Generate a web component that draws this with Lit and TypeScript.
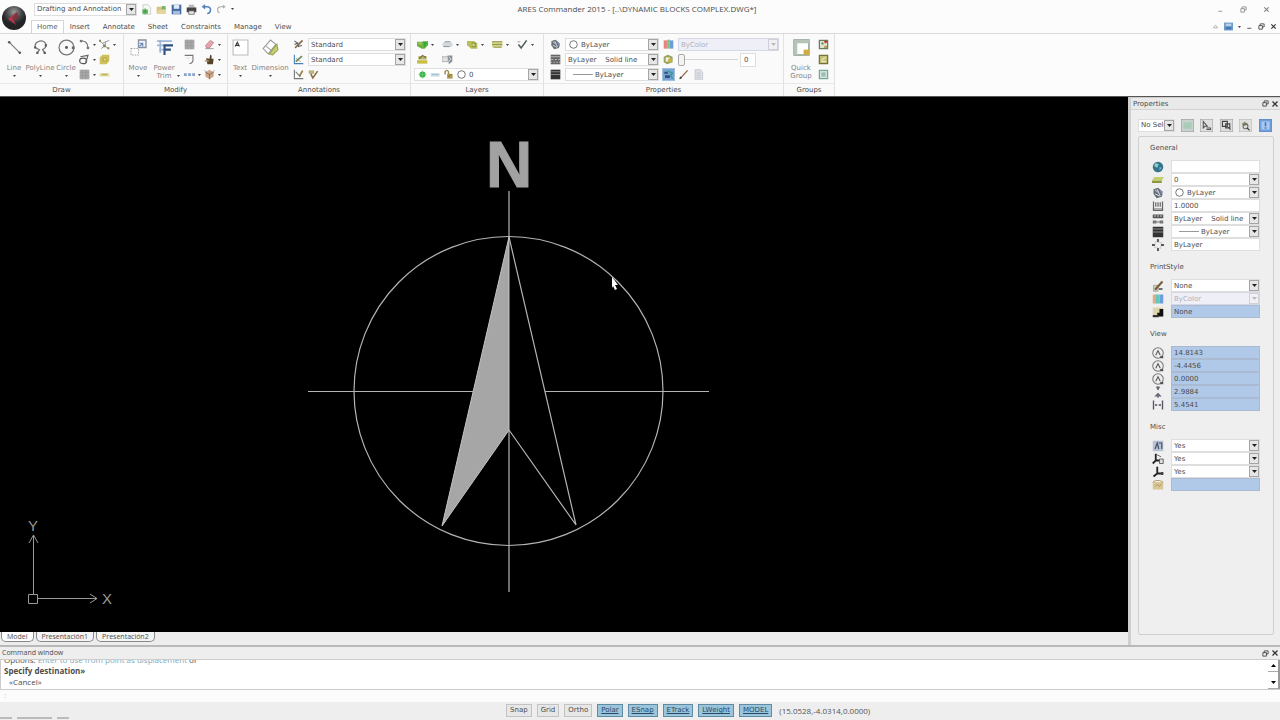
import { LitElement, html, svg, css, nothing } from "lit";
import { customElement, property } from "lit/decorators.js";
import { classMap } from "lit/directives/class-map.js";

const ICONS: Record<string, unknown> = {
  line: svg`<path d="M3 3L13 13" stroke="#777" fill="none"/><circle cx="3" cy="3" r="1.2" fill="#555"/><circle cx="13" cy="13" r="1.2" fill="#555"/>`,
  polyline: svg`<path d="M5 13L7 10L3 8C2 1 12 0 13 5C14 8 12 9 10 10L12 13" stroke="#777" stroke-width="1.2" fill="none"/><path d="M2 7h2v2H2zM4 12h2v2H4zM12 5h2v2h-2zM11 12h2v2h-2z" fill="#555"/>`,
  circle: svg`<circle cx="8" cy="8" r="7" stroke="#777" stroke-width="1.2" fill="none"/><circle cx="8" cy="8" r="1.4" fill="#555"/><path d="M13 7h2.500v2.500H13z" fill="#666"/>`,
  arc: svg`<path d="M3 3C9 2 13 6 13 13" stroke="#666" stroke-width="1.6" fill="none"/><circle cx="3" cy="3" r="2" fill="#777"/><circle cx="13" cy="13" r="2" fill="#777"/>`,
  spline: svg`<path d="M1 3L5 6L10 4L15 2M5 6L8 10L3 14M10 4L8 10L14 14" stroke="#999" stroke-width="1.4" fill="none"/><path d="M0 1h3v3H0zM6 8h4v4H6zM12 12h3v3h-3z" fill="#8a8a58"/>`,
  ellipse: svg`<ellipse cx="6" cy="10" rx="5" ry="4" stroke="#555" stroke-width="1.8" fill="none"/><path d="M2 4L13 2L10 12" stroke="#666" stroke-width="1.8" fill="none"/>`,
  region: svg`<path d="M5 1h10v9l-4 5H1V5z" fill="#cfc25e"/><path d="M5 5h7v6H5z" fill="#b8ab48"/><path d="M7 7h3v2H7z" fill="#efe9b0"/>`,
  hatch: svg`<path d="M1 1h14v14H1z" fill="#a7a7a7"/><path d="M1 5h14M1 10h14M5 1v14M10 1v14" stroke="#999"/>`,
  cloud: svg`<path d="M1 6h14v5H1z" fill="#e3dba6"/><path d="M4 8h8" stroke="#b9ac58" stroke-width="2"/>`,
  move: svg`<path d="M8 1h7v7H8z" stroke="#8590a0" stroke-width="1.3" fill="#f3f5fa"/><path d="M1 9h7v6H1z" stroke="#aaa" stroke-dasharray="1.5 1" fill="#fff"/><path d="M9 7l3-3M9 4h3v3" stroke="#6685b5" fill="none"/>`,
  trim: svg`<path d="M1 2h14M1 6h7M3 10h5M4 1v12" stroke="#9db5d6" stroke-width="1.6" fill="none"/><path d="M8 15V6h8M8 10h6" stroke="#2d5180" stroke-width="2" fill="none"/>`,
  fillet: svg`<path d="M1 2h12v7q0 4-5 5" stroke="#777" stroke-width="1.6" fill="none"/><path d="M3 6h6" stroke="#ccc"/>`,
  pattern: svg`<path d="M0 6h4v4H0zM6 6h4v4H6zM12 6h4v4h-4z" fill="#87a2c8"/>`,
  erase: svg`<path d="M2 10L9 2l5 3l-6 8H4z" fill="#e9a3ab" stroke="#a77" /><path d="M2 14h12" stroke="#777"/>`,
  hand: svg`<path d="M3 6l5 1l1-6l2 1v5h3l-1 8H5z" fill="#54432d"/><path d="M1 10h6" stroke="#b69b57" stroke-width="2"/>`,
  explode: svg`<path d="M8 1l6 4v6l-6 4l-6-4V5z" fill="#cfa68a"/><path d="M8 7v8M2 5l6 3l6-3M1 2l3 3M15 2l-3 3" stroke="#7b604d" fill="none"/>`,
  text: svg`<path d="M1 1h14v14H1z" fill="#fff" stroke="#bbb"/><path d="M3 7l2-4l2 4M4 6h2" stroke="#333" fill="none"/>`,
  dimension: svg`<path d="M1 9L8 1l5 4l-7 9z" fill="#fff" stroke="#999"/><path d="M7 14l7-9l1 5l-5 5z" fill="#c9d274" stroke="#98a250"/><path d="M4 7l5 4" stroke="#999"/>`,
  brush: svg`<path d="M3 13L14 2" stroke="#8a6d45" stroke-width="2.4"/><path d="M2 3l5 3M2 8l5-2l1 5l5-2" stroke="#666" stroke-width="1.6" fill="none"/>`,
  dimstyle: svg`<path d="M2 1v13h13" stroke="#4b82b6" stroke-width="1.6" fill="none"/><path d="M4 11L13 3" stroke="#698b47" stroke-width="2.2"/><path d="M4 6l7 5" stroke="#777"/>`,
  axes: svg`<path d="M2 1v13h13M4 4l6 7l4-9" stroke="#777" stroke-width="1.6" fill="none"/><path d="M9 10l5-7" stroke="#a88743" stroke-width="2.4"/>`,
  tag: svg`<path d="M1 2h8v5H1z" fill="#b9b27a"/><path d="M4 7l3 6l7-10" stroke="#866f46" stroke-width="2.2" fill="none"/>`,
  layergreen: svg`<path d="M0 4h8l8-1v6l-5 5H7L0 10z" fill="#6fae42"/><path d="M9 3l6 2l-4 8z" fill="#2fae34"/><path d="M2 5h5v3H2z" fill="#a8c75f"/>`,
  layergrey: svg`<path d="M3 4h10l3 4l-3 4H3L0 8z" fill="#d3d8dd"/><path d="M4 4h8M2 11h9" stroke="#92989d" stroke-width="1.6"/>`,
  layeryellow: svg`<path d="M0 3h10l5 3v8H6L0 9z" fill="#b8bf55"/><path d="M7 5h6v7H7z" fill="#959a4c"/><path d="M8 7h3v3H8z" fill="#dde295"/>`,
  layerlist: svg`<path d="M0 3h15v9H0z" fill="#d0d389"/><path d="M0 4h15M0 8h15M2 12h12" stroke="#94994e" stroke-width="1.5"/>`,
  check: svg`<path d="M2 8l4 5L14 2" stroke="#54625a" stroke-width="2.4" fill="none"/><path d="M1 3h4v2H1z" fill="#b8b8b8"/>`,
  layermanager: svg`<path d="M2 3h12v5H2z" fill="#b5b168"/><path d="M3 7l5-5l5 3" stroke="#6b6b3b" stroke-width="1.5" fill="none"/><path d="M0 9h15v5H0z" fill="#c9bd44"/>`,
  layerprev: svg`<path d="M0 4h9v7H0z" fill="#dfe3e6" stroke="#999"/><path d="M8 2h7v9l-5 4z" fill="#889199"/><path d="M10 4l3 3l-3 4" stroke="#fff" fill="none"/>`,
  dotgreen: svg`<circle cx="8" cy="8" r="4.5" fill="#35b445"/><path d="M8 2v12M2 8h12" stroke="#6fca76"/>`,
  freeze: svg`<path d="M1 6h13v5H1z" fill="#c9dde8"/><path d="M3 8h9" stroke="#8fb4c8"/>`,
  lock: svg`<path d="M3 8V4q3-4 5 0v4" fill="none" stroke="#9b8749" stroke-width="2"/><path d="M6 7h8v7H6z" fill="#ad9956"/><path d="M7 12l4-4" stroke="#665725"/>`,
  ring: svg`<circle cx="8" cy="8" r="5.5" fill="#fff" stroke="#666" stroke-width="1.3"/>`,
  palette: svg`<path d="M2 3l6-2l6 5l-1 7l-7 2l-4-6z" fill="#666e78"/><path d="M4 4l4 3M7 3l4 9M4 9l6 3" stroke="#d7dde4" stroke-width="1.3"/><path d="M10 4l4 2v6z" fill="#8d8ac0"/>`,
  linetype: svg`<path d="M1 1h14v14H1z" fill="#666"/><path d="M1 4h14M1 8h4m2 0h3m2 0h3M1 12h2m2 0h2m2 0h2m2 0h2" stroke="#ddd"/>`,
  weight: svg`<path d="M1 1h14v14H1z" fill="#333"/><path d="M1 4h14M1 8h14" stroke="#aaa"/>`,
  colors: svg`<path d="M1 2h5v12H1z" fill="#e88484"/><path d="M6 1h4v13H6z" fill="#79c982"/><path d="M10 2h5v12h-5z" fill="#6f9bdb"/>`,
  transp: svg`<path d="M1 4l6-3l7 3v8l-8 3l-5-3z" fill="#9aa45f"/><path d="M4 5h6v6H4z" fill="#f4f4e8"/><circle cx="10" cy="9" r="3" fill="#c8b348"/>`,
  painter: svg`<path d="M0 0h16v16H0z" fill="#78a2d2"/><path d="M2 4h5v3H2zM3 9h7v4H3z" fill="#324c81"/><path d="M7 3l7 3l-3 3l3 5" stroke="#379b94" stroke-width="2" fill="none"/>`,
  pencil: svg`<path d="M3 14L14 2" stroke="#8d6945" stroke-width="2"/><path d="M2 15l1-4l3 2z" fill="#333"/>`,
  page: svg`<path d="M3 1h8l3 4v10H3z" fill="#dfe1e8" stroke="#b9bcc8"/><path d="M5 6h6M5 9h6M5 12h6" stroke="#b9bcc8"/>`,
  quickgroup: svg`<path d="M1 1h14v14H1z" fill="#fff" stroke="#88a08e" stroke-width="1.4"/><path d="M1 1h14v3H1zM1 1h3v14H1z" fill="#b5c4b7"/><path d="M6 6h6v6H6z" fill="#fff"/><path d="M10 10h5v5h-5z" fill="#d3a943"/>`,
  groupedit: svg`<path d="M2 2h12v12H2z" fill="#dce4d3" stroke="#6c7f5d" stroke-width="1.8"/><path d="M5 5h3v3H5z" fill="#698c55"/><path d="M11 2v4M9 4h5" stroke="#c33" stroke-width="2"/><path d="M9 10h4v3H9z" fill="#b09b53"/>`,
  groupyellow: svg`<path d="M2 2h12v12H2z" fill="#c5c173" stroke="#75743c" stroke-width="1.8"/><path d="M5 9l6-4M5 11h6" stroke="#f3f2d3" stroke-width="1.5"/>`,
  groupteal: svg`<path d="M2 2h12v12H2z" fill="#cde2da" stroke="#7ba897" stroke-width="1.8"/><path d="M5 5h6v6H5z" fill="#9dbfb1"/>`,
  newfile: svg`<path d="M3 1h7l4 4v10H3z" fill="#f5f8f5" stroke="#b5c3b5"/><path d="M2 8h8v6H2z" fill="#58b158"/><path d="M6 6v9" stroke="#2d8c2d"/>`,
  open: svg`<path d="M1 4h6l1 2h6v8H1z" fill="#d9c27a"/><path d="M8 3h6v6H8z" fill="#7bb26d"/><path d="M1 14l3-6h11l-3 6z" fill="#e6d69d"/>`,
  save: svg`<path d="M1 1h14v14H1z" fill="#45699e"/><path d="M4 1h8v6H4z" fill="#dfe8f5"/><path d="M3 10h10v5H3z" fill="#a5bddc"/>`,
  print: svg`<path d="M4 1h8v4H4z" fill="#bbb"/><path d="M1 5h14v7H1z" fill="#444"/><path d="M4 10h8v5H4z" fill="#e8e8e8" stroke="#555"/>`,
  undo: svg`<path d="M5 4h4c7 0 6 9 0 10" stroke="#5383bd" stroke-width="2.2" fill="none"/><path d="M6 0v8L1 4z" fill="#5383bd"/>`,
  redo: svg`<path d="M11 4H7C1 4 1 11 5 13" stroke="#aaa" stroke-width="1.6" fill="none"/><path d="M10 1v6l4-3z" fill="#aaa"/>`,
  minimize: svg`<path d="M3 11h9v2H3z" fill="#444"/>`,
  restore: svg`<path d="M5 6V2h9v7h-4" stroke="#444" stroke-width="2" fill="none"/><path d="M2 6h8v8H2z" stroke="#444" stroke-width="2" fill="none"/>`,
  close: svg`<path d="M3 3l10 10M13 3L3 13" stroke="#333" stroke-width="2.6"/>`,
  up: svg`<path d="M3 11l5-6l5 6z" fill="none" stroke="#999" stroke-width="1.6"/>`,
  help: svg`<path d="M0 1h16v14H0z" fill="#6e9dcc"/><path d="M3 3h10v4H3z" fill="#b9d3ec"/><path d="M3 9h10v4H3z" fill="#4577b0"/>`,
  globe: svg`<circle cx="8" cy="8" r="7" fill="#35758b"/><path d="M4 3l5 1l-2 5l-4-2z" fill="#8fd0c6"/><path d="M10 8l3 1l-3 4z" fill="#74b0d8"/>`,
  layerprop: svg`<path d="M3 4h13l-3 5H0z" fill="#c4ce6c"/><path d="M0 9h13v3H0z" fill="#8d9740"/>`,
  scale: svg`<path d="M2 2v12h12V2M5 3v6M8 3v6M11 3v6M1 12h14" stroke="#666" stroke-width="1.6" fill="none"/>`,
  ltprop: svg`<path d="M1 2h14v5H1z" fill="#555"/><path d="M3 4h2m2 0h2m2 0h2" stroke="#eee" stroke-width="1.5"/><path d="M1 10h5v4H1zM10 10h5v4h-5z" fill="#777"/><path d="M6 12h4" stroke="#777" stroke-width="1.5"/>`,
  hyper: svg`<path d="M8 0v4M8 12v4M0 8h4M12 8h4" stroke="#555" stroke-width="2.6"/><path d="M4 4h8v8H4z" fill="none" stroke="#999" stroke-dasharray="2 2"/>`,
  printpen: svg`<path d="M2 7h6v8H2z" fill="#c9d8ba" stroke="#999"/><path d="M4 13L14 2" stroke="#7b5c38" stroke-width="2.8"/><path d="M9 12h5" stroke="#444" stroke-width="2"/>`,
  printcolors: svg`<path d="M1 2h5v12H1z" fill="#e5aa86"/><path d="M5 2h5v12H5z" fill="#62c8bb"/><path d="M10 2h5v12h-5z" fill="#6c9edc"/>`,
  printdark: svg`<path d="M1 2h14v12H1z" fill="#ded5ad"/><path d="M7 14V9h3V4h5v10z" fill="#111"/><path d="M1 12h8v3H1z" fill="#333"/>`,
  target: svg`<circle cx="8" cy="8" r="7" fill="none" stroke="#777" stroke-width="1.4"/><path d="M5 11l3-6l3 6" stroke="#555" stroke-width="1.4" fill="none"/><path d="M11 12h4v3h-4z" fill="#555"/>`,
  height: svg`<path d="M8 0v5M8 16v-5" stroke="#667" stroke-width="1.5"/><path d="M5 1h6L8 6zM3 14h10l-5-5z" fill="#667"/>`,
  width: svg`<path d="M2 2v12M14 2v12M4 8h3M9 8h3" stroke="#556" stroke-width="1.8"/>`,
  annot: svg`<path d="M1 1h14v14H1z" fill="#b8c2d4"/><path d="M4 12l3-8l2 8M9 4h4v8" stroke="#455068" stroke-width="1.6" fill="none"/>`,
  ucsper: svg`<path d="M5 1v9l-4 4M5 10h5" stroke="#222" stroke-width="2.4" fill="none"/><path d="M6 2l6 3M10 8h5v6h-5z" stroke="#444" fill="#ddd"/>`,
  ucs: svg`<path d="M7 1v9l-5 4M7 10h8" stroke="#222" stroke-width="2.4" fill="none"/><path d="M12 8h3v4h-3z" fill="#444"/>`,
  plot: svg`<path d="M1 4h14v10H1z" fill="#d9c795"/><path d="M1 4l4-2h5l5 2M4 10l3-3l3 3l3-4" stroke="#a3874a" fill="none"/>`,
  selgreen: svg`<path d="M0 0h16v16H0z" fill="#c9d3cd" stroke="#888"/><path d="M3 4h10v8H3z" fill="#a9cbb8"/>`,
  selcursor: svg`<path d="M0 0h16v16H0z" fill="#e0e0e0" stroke="#888"/><path d="M4 3v8l2-2h3zM8 11h5v2H8" stroke="#555" stroke-width="1.3" fill="none"/>`,
  selfind: svg`<path d="M0 0h16v16H0z" fill="#dcdcdc" stroke="#888"/><path d="M3 3h6v6H3zM7 6h5v5H7zM10 10l3 3" stroke="#444" stroke-width="1.4" fill="none"/>`,
  selquick: svg`<path d="M0 0h16v16H0z" fill="#dfdfdb" stroke="#aaa"/><path d="M3 6l4-3l4 3l-4 3z" fill="#9a9a78"/><circle cx="8" cy="9" r="3" fill="none" stroke="#666" stroke-width="1.3"/><path d="M10 11l3 3" stroke="#444" stroke-width="1.6"/>`,
  selhelp: svg`<path d="M0 0h16v16H0z" fill="#6f9fdb" stroke="#567fb8"/><path d="M3 3h10v10H3z" fill="#a9c8f0"/><path d="M8 4v5M8 10v2" stroke="#4875b8" stroke-width="2"/>`,
};

const shared = css`
  * { box-sizing: border-box; }
  button, select, input { font: inherit; color: inherit; margin: 0; padding: 0; border: 0; background: none; border-radius: 0; }
  svg { display: block; }
`;

@customElement("cad-icon")
class CadIcon extends LitElement {
  @property() name = "";
  @property({ type: Number }) size = 11;
  static styles = css`:host { display: block; flex: none; } svg { display: block; }`;
  render() {
    return html`<svg width=${this.size} height=${this.size} viewBox="0 0 16 16" aria-hidden="true">${ICONS[this.name]}</svg>`;
  }
}

@customElement("cad-combo")
class CadCombo extends LitElement {
  @property() label = "";
  @property() value = "";
  @property() swatch = "";
  @property({ type: Boolean }) disabled = false;
  static styles = [shared, css`
    :host { display: flex; height: 13px; min-width: 0; background: #fff; border: 1px solid #dedede; }
    :host([disabled]) { background: #eeeff7; color: #b0b0b8; border-color: #d5d7e2; }
    .swatches { display: flex; align-items: center; gap: 2px; padding-left: 2px; }
    .rule { width: 20px; height: 1px; background: #999; margin: 0 0 0 5px; }
    select { flex: 1; min-width: 0; width: 0; appearance: none; padding-left: 2px; outline: none; opacity: 1; white-space: pre; }
    .arrow { flex: none; width: 10px; display: grid; place-items: center; background: #e6e6e6; border: 1px solid #a5a5a5; color: #222; }
    :host([disabled]) .arrow { background: #f1f1f5; border-color: #d0d0da; color: #bbb; }
  `];
  render() {
    const s = this.swatch;
    return html`
      ${s ? html`<span class="swatches">${s === "rule" ? html`<span class="rule"></span>` : s.split(" ").map((n) => html`<cad-icon name=${n}></cad-icon>`)}</span>` : nothing}
      <select aria-label=${this.label} ?disabled=${this.disabled}><option>${this.value}</option></select>
      <span class="arrow" aria-hidden="true"><svg width="5" height="3" viewBox="0 0 5 3"><path d="M0 0h5L2.500 3z" fill="currentColor"/></svg></span>`;
  }
}

const caret = html`<svg class="caret" width="3" height="2" viewBox="0 0 3 2" aria-hidden="true"><path d="M0 0h3L1.500 2z" fill="#444"/></svg>`;

@customElement("cad-ribbon")
class CadRibbon extends LitElement {
  static styles = [shared, css`
    :host { display: flex; background: #fcfcfc; border-top: 1px solid #d9d9d9; border-bottom: 1px solid #555; color: #4c4c4c; }
    .group { display: flex; flex-direction: column; flex: none; border-right: 1px solid #e2e2e2; background: #fafafa; }
    .body { display: flex; padding: 3px 0 0 1px; height: 49px; }
    .caption { height: 13px; line-height: 12px; text-align: center; border-top: 1px solid #e8e8e8; }
    .draw { width: 124px; }
    .modify { width: 104px; }
    .annotations { width: 183px; }
    .layers { width: 133px; }
    .properties { width: 240px; }
    .groups { width: 51px; }
    .big { flex: none; display: flex; flex-direction: column; align-items: center; gap: 3px; width: 26px; padding-top: 2px; color: #858585; line-height: 8px; }
    .big .label { margin-top: 5px; }
    .narrow { width: 22px; }
    .dim { width: 38px; }
    .quick { width: 32px; }
    .drop { display: flex; align-items: center; justify-content: center; gap: 6px; padding-left: 9px; }
    .small { display: grid; grid-template-rows: repeat(3, 15px); grid-auto-flow: column; justify-content: start; }
    .tool { display: flex; align-items: center; gap: 3px; min-width: 20px; }
    .groups .tool { min-width: 0; padding-left: 1px; }
    .row { display: flex; align-items: center; gap: 4px; min-width: 0; }
    .even { display: grid; grid-template-columns: repeat(5, 25px); gap: 0; padding-left: 3px; }
    .stack { flex: 1; min-width: 0; display: grid; grid-template-rows: repeat(3, 15px); padding: 0 4px 0 2px; }
    .annotations .stack { padding-left: 4px; }
    .row cad-combo { flex: 1; }
    .props { flex: 1; display: grid; grid-template-columns: 109px 1fr; grid-template-rows: repeat(3, 15px); column-gap: 4px; padding: 0 4px 0 5px; }
    .slider { flex: 1; display: flex; align-items: center; gap: 2px; padding-right: 20px; }
    .range { appearance: none; width: 60px; height: 13px; background: linear-gradient(#d5d5d5, #d5d5d5) center / 100% 1px no-repeat; }
    .range::-webkit-slider-thumb { appearance: none; width: 7px; height: 12px; background: #f3f3f3; border: 1px solid #aaa; border-radius: 2px; }
    .amount { width: 16px; height: 14px; border: 1px solid #ddd; background: #fff; padding-left: 3px; }
    .on { outline: 1px solid #9ebfdf; }
    .inset { padding-left: 7px; }
  `];
  big(icon: string, label: unknown, cls = "", arrow = true) {
    return html`<button class="big ${cls}"><cad-icon name=${icon} size="17"></cad-icon><span class="label">${label}</span>${arrow ? caret : nothing}</button>`;
  }
  tool(icon: string, name: string, arrow = false) {
    return html`<button class="tool" aria-label=${name}><cad-icon name=${icon}></cad-icon>${arrow ? caret : nothing}</button>`;
  }
  render() {
    return html`
      <section class="group draw"><div class="body">
        ${this.big("line", "Line")}${this.big("polyline", "PolyLine")}${this.big("circle", "Circle")}
        <div class="small">
          ${this.tool("arc", "Arc", true)}${this.tool("ellipse", "Ellipse", true)}${this.tool("hatch", "Hatch", true)}
          ${this.tool("spline", "Spline", true)}${this.tool("region", "Region")}${this.tool("cloud", "Cloud")}
        </div></div><div class="caption">Draw</div></section>
      <section class="group modify"><div class="body">
        ${this.big("move", "Move")}${this.big("trim", html`Power<span class="drop">Trim${caret}</span>`, "", false)}
        <div class="small inset">
          ${this.tool("hatch", "Pattern")}${this.tool("fillet", "Fillet")}${this.tool("pattern", "Array", true)}
          ${this.tool("erase", "Delete", true)}${this.tool("hand", "Edit", true)}${this.tool("explode", "Explode", true)}
        </div></div><div class="caption">Modify</div></section>
      <section class="group annotations"><div class="body">
        ${this.big("text", "Text", "narrow")}${this.big("dimension", "Dimension", "dim")}
        <div class="stack">
          <div class="row"><cad-icon name="brush"></cad-icon><cad-combo label="Text style" value="Standard"></cad-combo></div>
          <div class="row"><cad-icon name="dimstyle"></cad-icon><cad-combo label="Dimension style" value="Standard"></cad-combo></div>
          <div class="row"><cad-icon name="axes"></cad-icon><cad-icon name="tag"></cad-icon></div>
        </div></div><div class="caption">Annotations</div></section>
      <section class="group layers"><div class="body"><div class="stack">
          <div class="row even">${this.tool("layergreen", "Activate layer", true)}${this.tool("layergrey", "Hide layer", true)}${this.tool("layeryellow", "Lock layer", true)}${this.tool("layerlist", "Layer states", true)}${this.tool("check", "Match layer", true)}</div>
          <div class="row even">${this.tool("layermanager", "Layers manager")}${this.tool("layerprev", "Previous layer")}</div>
          <div class="row"><cad-combo label="Layer" swatch="dotgreen freeze lock ring" value="0"></cad-combo></div>
        </div></div><div class="caption">Layers</div></section>
      <section class="group properties"><div class="body"><div class="props">
          <div class="row"><cad-icon name="palette"></cad-icon><cad-combo label="Line color" swatch="ring" value="ByLayer"></cad-combo></div>
          <div class="row"><cad-icon name="colors"></cad-icon><cad-combo label="Print color" value="ByColor" disabled></cad-combo></div>
          <div class="row"><cad-icon name="linetype"></cad-icon><cad-combo label="Line style" value="ByLayer \u00a0 \u00a0Solid line"></cad-combo></div>
          <div class="row"><cad-icon name="transp"></cad-icon><span class="slider"><input class="range" type="range" aria-label="Transparency" value="0" /><input class="amount" aria-label="Transparency value" value="0" /></span></div>
          <div class="row"><cad-icon name="weight"></cad-icon><cad-combo label="Line weight" swatch="rule" value="ByLayer"></cad-combo></div>
          <div class="row"><button class="on" aria-label="Property painter"><cad-icon name="painter"></cad-icon></button><button aria-label="Edit properties"><cad-icon name="pencil"></cad-icon></button><button aria-label="List"><cad-icon name="page"></cad-icon></button></div>
        </div></div><div class="caption">Properties</div></section>
      <section class="group groups"><div class="body">
        ${this.big("quickgroup", html`Quick<br />Group`, "quick", false)}
        <div class="small">${this.tool("groupedit", "Edit group")}${this.tool("groupyellow", "Group manager")}${this.tool("groupteal", "Ungroup")}</div>
      </div><div class="caption">Groups</div></section>`;
  }
}

type Field = { icon: string; label: string; value: string; kind: "text" | "combo" | "locked"; swatch?: string; disabled?: boolean };
const f = (icon: string, label: string, value: string, kind: Field["kind"] = "text", swatch = "", disabled = false): Field => ({ icon, label, value, kind, swatch, disabled });

const SECTIONS: { title: string; fields: Field[] }[] = [
  { title: "General", fields: [
    f("globe", "Hyperlink", ""), f("layerprop", "Layer", "0", "combo"), f("palette", "Line color", "ByLayer", "combo", "ring"),
    f("scale", "Line scale", "1.0000"), f("ltprop", "Line style", "ByLayer \u00a0 \u00a0Solid line", "combo"),
    f("weight", "Line weight", "ByLayer", "combo", "rule"), f("hyper", "Transparency", "ByLayer") ] },
  { title: "PrintStyle", fields: [
    f("printpen", "Print style", "None", "combo"), f("printcolors", "Print color", "ByColor", "combo", "", true), f("printdark", "Print table", "None", "locked") ] },
  { title: "View", fields: [
    f("target", "Center X", "14.8143", "locked"), f("target", "Center Y", "-4.4456", "locked"), f("target", "Center Z", "0.0000", "locked"),
    f("height", "Height", "2.9884", "locked"), f("width", "Width", "5.4541", "locked") ] },
  { title: "Misc", fields: [
    f("annot", "Annotation scale", "Yes", "combo"), f("ucsper", "CCS per view", "Yes", "combo"), f("ucs", "CCS icon", "Yes", "combo"), f("plot", "Plot", "", "locked") ] },
];

@customElement("cad-properties")
class CadProperties extends LitElement {
  static styles = [shared, css`
    :host { display: flex; flex-direction: column; background: #eee; border-left: 3px solid #cfcfcf; color: #4c4c4c; }
    .title { display: flex; align-items: center; gap: 2px; height: 13px; padding: 0 1px 0 2px; border-top: 1px solid #ccc; border-bottom: 1px solid #d3d3d3; background: #e9e9e9; }
    .title span { flex: 1; }
    .tools { display: flex; align-items: center; justify-content: space-between; height: 14px; margin: 8px 8px 3px 7px; }
    .tools cad-combo { width: 37px; margin-right: -1px; }
    .box { flex: 1; display: flex; flex-direction: column; gap: 10px; margin: 1px 6px 10px 7px; padding: 5px 13px 0 11px; border: 1px solid #cfcfcf; border-radius: 2px; background: #efefef; }
    h3 { margin: 0 0 5px; font-size: inherit; font-weight: 400; line-height: 13px; }
    .row { display: grid; grid-template-columns: 16px 1fr; column-gap: 5px; height: 13px; align-items: center; }
    .row cad-icon { justify-self: center; }
    .row input { width: 100%; min-width: 0; height: 13px; padding-left: 2px; background: #fff; border: 1px solid #dedede; }
    .row .locked { background: #b1c9e8; border-color: #a9bad1; }
  `];
  render() {
    return html`
      <div class="title"><span>Properties</span><button aria-label="Float"><cad-icon name="restore" size="7"></cad-icon></button><button aria-label="Close"><cad-icon name="close" size="8"></cad-icon></button></div>
      <div class="tools"><cad-combo label="Selection" value="No Selection"></cad-combo>
        ${["selgreen", "selcursor", "selfind", "selquick", "selhelp"].map((n) => html`<button aria-label=${n}><cad-icon name=${n} size="13"></cad-icon></button>`)}
      </div>
      <div class="box">${SECTIONS.map((s) => html`<section><h3>${s.title}</h3>${s.fields.map((x) => html`
        <div class="row"><cad-icon name=${x.icon} size="12"></cad-icon>
          ${x.kind === "combo"
            ? html`<cad-combo label=${x.label} value=${x.value} swatch=${x.swatch ?? ""} ?disabled=${x.disabled}></cad-combo>`
            : html`<input class=${classMap({ locked: x.kind === "locked" })} aria-label=${x.label} .value=${x.value} ?readonly=${x.kind === "locked"} />`}
        </div>`)}</section>`)}</div>`;
  }
}

@customElement("cad-drawing")
class CadDrawing extends LitElement {
  static styles = css`
    :host { display: block; position: relative; background: #000; overflow: hidden; }
    .sheet { display: block; width: 100%; height: 100%; }
    .origin { position: absolute; left: 20px; bottom: 20px; }
    .north { font: bold 64px "Liberation Sans", sans-serif; }
    .axis { font: 15px "Liberation Sans", sans-serif; }
  `;
  render() {
    return html`
      <svg class="sheet" viewBox="0 97 1128 535" role="img" aria-label="North arrow block">
        <text class="north" x="509" y="187" text-anchor="middle" fill="#a2a2a2" stroke="#a2a2a2">N</text>
        <g fill="none" stroke="#b4b4b4" stroke-width="1.2">
          <circle cx="508.500" cy="391" r="154.500"/>
          <path d="M509 191V237M509 430V592M308 391.500H473M545 391.500H709"/>
          <path d="M509 237L576 525L509 430"/>
        </g>
        <path d="M509 237V430L442 526Z" fill="#a6a6a6" stroke="#c4c4c4"/>
        <path d="M612 277l6 8h-3l2 4l-2 1l-2-4l-1 2z" fill="#fff"/>
      </svg>
      <svg class="origin" width="96" height="100" viewBox="20 512 96 100" aria-hidden="true">
        <g fill="none" stroke="#999"><path d="M28.500 594.500h9v9h-9zM33.500 594V535M38 598.500H97M29 543l4.500-8l4.500 8M90 594l7 4.500l-7 4.500"/></g>
        <text class="axis" x="33" y="531" text-anchor="middle" fill="#999">Y</text>
        <text class="axis" x="107" y="604" text-anchor="middle" fill="#999">X</text>
      </svg>`;
  }
}

@customElement("app-root")
class AppRoot extends LitElement {
  static styles = [shared, css`
    :host { display: flex; flex-direction: column; height: 100vh; overflow: hidden; background: #eee; color: #4c4c4c; font: 7px/10px "DejaVu Sans", "Open Sans", sans-serif; }
    .head { display: grid; grid-template-columns: 32px 1fr; background: #fcfcfc; height: 33px; }
    .logo { grid-row: 1 / 3; width: 26px; height: 26px; margin: 5px 0 0 1px; }
    .bar { display: grid; grid-template-columns: 1fr auto 1fr; align-items: center; height: 18px; padding-left: 2px; }
    .quick { display: flex; align-items: center; gap: 4px; }
    .quick cad-combo { width: 103px; }
    .caption { font: 8px/12px "Open Sans", sans-serif; margin-right: 40px; }
    .window { display: flex; justify-content: end; gap: 16px; padding-right: 10px; opacity: .6; }
    .tabs { display: flex; align-items: stretch; height: 15px; padding-top: 2px; }
    .tab { display: flex; align-items: center; text-decoration: none; color: #4c4c4c; padding: 0 7px 0 6px; }
    .tab.active { border: 1px solid #d4d4d4; border-bottom: 0; background: #fff; padding: 0 5px; color: #666; margin-left: -1px; }
    .doc { display: flex; align-items: center; gap: 5px; margin-left: auto; padding-right: 3px; }
    .main { flex: 1; min-height: 0; display: grid; grid-template-columns: 1fr 152px; }
    .left { display: flex; flex-direction: column; min-height: 0; }
    cad-drawing { flex: 1; min-height: 0; }
    .sheets { display: flex; height: 13px; background: #ededed; padding: 0 1px; gap: 2px; font-family: "Open Sans", sans-serif; }
    .sheet { height: 10px; padding: 0 5px; line-height: 9px; background: #f4f4f4; border: 1px solid #888; border-top: 0; border-radius: 0 0 5px 5px; }
    .sheet.active { background: #fff; }
    .command { border-top: 2px solid #b9b9b9; }
    .ctitle { display: flex; align-items: center; gap: 2px; height: 12px; padding: 0 1px 0 2px; font-family: "Open Sans", sans-serif; }
    .ctitle span { flex: 1; }
    .log { display: flex; height: 31px; background: #fff; border: 1px solid #ccc; border-right: 0; }
    .lines { flex: 1; display: flex; flex-direction: column; justify-content: flex-end; overflow: hidden; padding: 0 0 2px 3px; font: 8px/11px "Open Sans", sans-serif; }
    .hint { color: #7ba9bd; }
    .indent { padding-left: 5px; }
    .scroll { width: 12px; display: flex; flex-direction: column; justify-content: space-between; border-right: 2px solid #999; }
    .scroll button { height: 12px; border-bottom: 1px solid #aaa; display: grid; place-items: center; }
    .prompt { display: block; width: 100%; height: 12px; background: #fcfcfc; padding-left: 4px; color: #aaa; }
    .status { display: flex; align-items: center; gap: 5px; height: 18px; padding-bottom: 1px; }
    .ready { flex: 0 1 501px; align-self: end; display: flex; gap: 5px; }
    .ready i { height: 2px; background: #bbb; flex: 0 0 12px; }
    .ready .long { flex-basis: 35px; }
    .toggle { height: 13px; padding: 0 3px; border: 1px solid #c3c3c3; background: #e7e7e7; line-height: 11px; }
    .toggle.pressed { background: #9cc4da; border-color: #5f8ba5; color: #234b66; text-decoration: underline; }
    .coords { color: #555; margin-left: 2px; font: 8px/11px "Open Sans", sans-serif; }
  `];
  render() {
    const toggles: [string, boolean][] = [["Snap", false], ["Grid", false], ["Ortho", false], ["Polar", true], ["ESnap", true], ["ETrack", true], ["LWeight", true], ["MODEL", true]];
    return html`
      <header class="head">
        <svg class="logo" viewBox="0 0 26 26" aria-hidden="true"><defs><radialGradient id="g" cy=".25"><stop offset="0" stop-color="#999"/><stop offset=".6" stop-color="#4a4a4c"/><stop offset="1" stop-color="#242426"/></radialGradient></defs>
          <circle cx="13" cy="13" r="12" fill="url(#g)"/><path d="M16 7L7 14l8 6l-3-6z" fill="#b5374a"/><path d="M16 7l-5 6l2 3l5-4z" fill="#7d3540"/></svg>
        <div class="bar">
          <div class="quick"><cad-combo label="Workspace" value="Drafting and Annotation"></cad-combo>
            ${["newfile", "open", "save", "print", "undo", "redo"].map((n) => html`<button aria-label=${n}><cad-icon name=${n}></cad-icon></button>`)}${caret}</div>
          <div class="caption">ARES Commander 2015 - [..\\DYNAMIC BLOCKS COMPLEX.DWG*]</div>
          <div class="window">${["minimize", "restore", "close"].map((n) => html`<button aria-label=${n}><cad-icon name=${n} size="7"></cad-icon></button>`)}</div>
        </div>
        <nav class="tabs">
          ${["Home", "Insert", "Annotate", "Sheet", "Constraints", "Manage", "View"].map((t, i) => html`<a href="#" class=${classMap({ tab: true, active: i === 0 })}>${t}</a>`)}
          <div class="doc"><cad-icon name="up" size="7"></cad-icon><button aria-label="Help"><cad-icon name="help" size="9"></cad-icon></button>${caret}
            ${["minimize", "restore", "close"].map((n) => html`<button aria-label="Drawing ${n}"><cad-icon name=${n} size="7"></cad-icon></button>`)}</div>
        </nav>
      </header>
      <cad-ribbon></cad-ribbon>
      <main class="main">
        <div class="left"><cad-drawing></cad-drawing>
          <div class="sheets"><button class="sheet active">Model</button><button class="sheet">Presentación1</button><button class="sheet">Presentación2</button></div></div>
        <cad-properties></cad-properties>
      </main>
      <section class="command">
        <div class="ctitle"><span>Command window</span><button aria-label="Float"><cad-icon name="restore" size="7"></cad-icon></button><button aria-label="Close"><cad-icon name="close" size="8"></cad-icon></button></div>
        <div class="log"><div class="lines">
          <div>Options: <span class="hint">Enter to use from point as displacement</span> or</div>
          <b>Specify destination»</b><div class="indent">«Cancel»</div></div>
          <div class="scroll"><button aria-label="Scroll up"><svg width="5" height="3" viewBox="0 0 5 3"><path d="M0 3h5L2.500 0z"/></svg></button><button aria-label="Scroll down"><svg width="5" height="3" viewBox="0 0 5 3"><path d="M0 0h5L2.500 3z"/></svg></button></div></div>
        <input class="prompt" aria-label="Command" value=":" />
      </section>
      <footer class="status"><div class="ready"><i></i><i class="long"></i><i></i></div>
        ${toggles.map(([t, on]) => html`<button class=${classMap({ toggle: true, pressed: on })} aria-pressed=${on ? "true" : "false"}>${t}</button>`)}
        <span class="coords">(15.0528,-4.0314,0.0000)</span>
      </footer>`;
  }
}
